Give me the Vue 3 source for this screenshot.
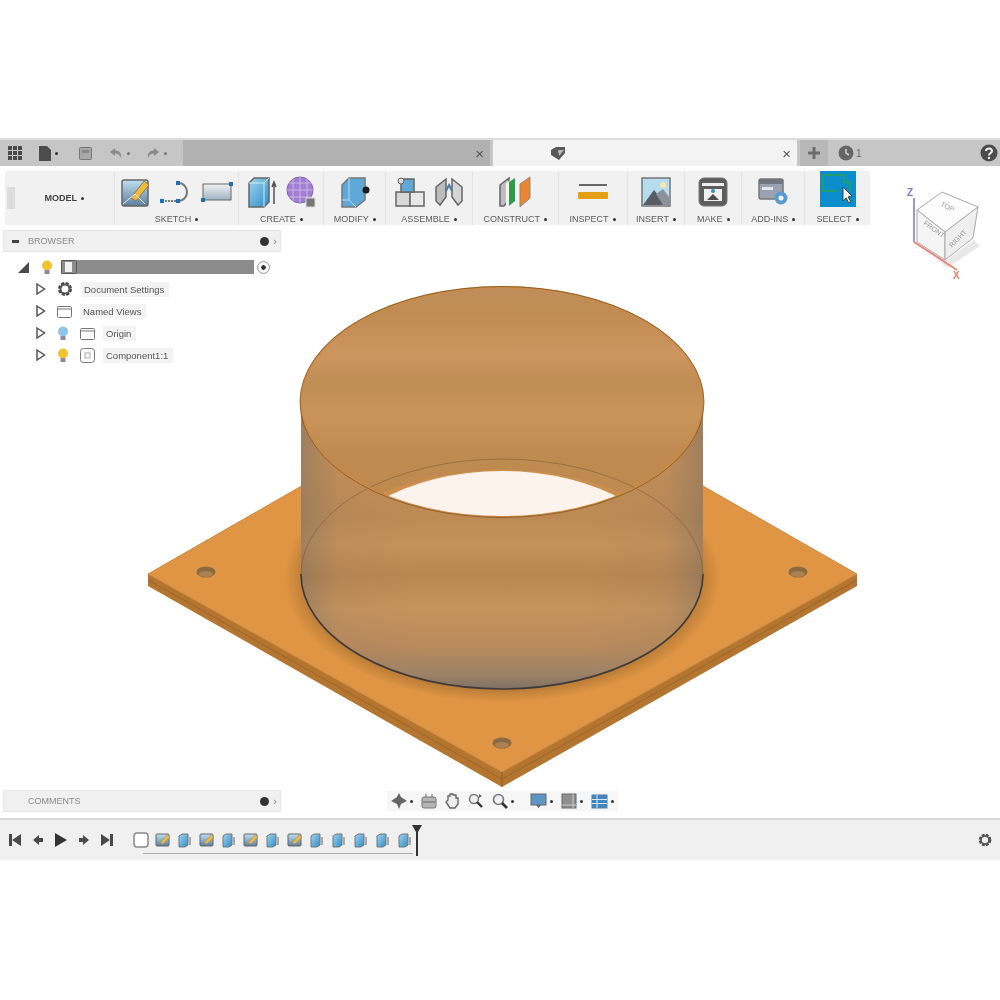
<script setup>
const treeRows = [
  { label: 'Document Settings', icon: 'gear' },
  { label: 'Named Views', icon: 'folder' },
  { label: 'Origin', icon: 'folder', bulb: '#8fc3e8' },
  { label: 'Component1:1', icon: 'comp', bulb: '#f2c230' },
]
const timelineItems = ['sk', 'ex', 'sk', 'ex', 'sk', 'ex', 'sk', 'ex', 'ex', 'ex', 'ex', 'ex']
</script>

<template>
  <div class="page">
    <svg class="defs" width="0" height="0">
      <defs>
        <linearGradient id="blueBox" x1="0" y1="0" x2="1" y2="1">
          <stop offset="0" stop-color="#9fd3ef" />
          <stop offset="1" stop-color="#2f8fc9" />
        </linearGradient>
        <linearGradient id="skyFill" x1="0" y1="0" x2="0" y2="1">
          <stop offset="0" stop-color="#bfe0f2" />
          <stop offset="1" stop-color="#5d7f9c" />
        </linearGradient>
        <symbol id="sk" viewBox="0 0 16 16">
          <rect x="1" y="2" width="13" height="12" rx="1" fill="url(#skyFill)" stroke="#666" />
          <path d="M5 11 L12 3 L15 5 L8 12 Z" fill="#f0b93a" stroke="#888" stroke-width=".5" />
        </symbol>
        <symbol id="ex" viewBox="0 0 16 16">
          <path d="M2 4 L5 2 H11 V13 L8 15 H2 Z" fill="url(#blueBox)" stroke="#777" />
          <path d="M13 5 V13" stroke="#aaa" stroke-width="2" />
        </symbol>
      </defs>
    </svg>

    <div class="app">
      <header class="tabbar">
        <div class="quick">
          <svg class="qa" width="14" height="14" viewBox="0 0 14 14" fill="#4a4a4a">
            <rect x="0" y="0" width="4" height="4" /><rect x="5" y="0" width="4" height="4" /><rect x="10" y="0" width="4" height="4" />
            <rect x="0" y="5" width="4" height="4" /><rect x="5" y="5" width="4" height="4" /><rect x="10" y="5" width="4" height="4" />
            <rect x="0" y="10" width="4" height="4" /><rect x="5" y="10" width="4" height="4" /><rect x="10" y="10" width="4" height="4" />
          </svg>
          <svg class="qb" width="12" height="15" viewBox="0 0 12 15"><path d="M0 0 H8 L12 4 V15 H0 Z" fill="#4d4d4d" /></svg>
          <i class="dot qdot" />
          <svg class="qc" width="13" height="13" viewBox="0 0 13 13"><rect x=".5" y=".5" width="12" height="12" rx="1" fill="#a8a8a8" stroke="#777" /><rect x="3" y="3" width="7" height="3" fill="#888" /></svg>
          <svg class="qd" width="14" height="12" viewBox="0 0 14 12"><path d="M6 1 L1 5 L6 9 V6.5 C9 6.5 11 8 12 11 C13 6 10 3.5 6 3.5 Z" fill="#8a8a8a" /></svg>
          <i class="dot qdot light" />
          <svg class="qe" width="14" height="12" viewBox="0 0 14 12"><path d="M8 1 L13 5 L8 9 V6.5 C5 6.5 3 8 2 11 C1 6 4 3.5 8 3.5 Z" fill="#8a8a8a" /></svg>
          <i class="dot qdot light" />
        </div>
        <div class="tab tab-off"><span class="tab-x">×</span></div>
        <div class="tab tab-on">
          <svg class="doc-icon" width="16" height="13" viewBox="0 0 16 13"><path d="M1 3 L6 0 H15 V6 L9 13 L1 8 Z" fill="#5a5a5a" /><path d="M8 3 H14 L9 9 Z" fill="#bbb" /></svg>
          <span class="tab-x">×</span>
        </div>
        <div class="tab-add">
          <svg width="14" height="14" viewBox="0 0 14 14"><path d="M7 1 V13 M1 7 H13" stroke="#6c6c6c" stroke-width="3" /></svg>
        </div>
        <div class="tab-rest">
          <svg width="16" height="16" viewBox="0 0 16 16"><circle cx="8" cy="8" r="7.5" fill="#666" /><path d="M8 4 V8 L11 10" stroke="#ccc" stroke-width="1.6" fill="none" /></svg>
          <span class="job-count">1</span>
          <svg class="help" width="18" height="18" viewBox="0 0 18 18"><circle cx="9" cy="9" r="8.5" fill="#4b4b4b" /><path d="M6 7 C6 3.5 12 3.5 12 7 C12 9 9 9 9 11.5" stroke="#eee" stroke-width="2" fill="none" /><circle cx="9" cy="14" r="1.2" fill="#eee" /></svg>
        </div>
      </header>

      <main class="workspace">
        <!-- model is drawn in page coordinates -->
        <svg class="model" width="1000" height="654" viewBox="0 166 1000 654">
          <defs>
            <linearGradient id="innerWall" x1="0" y1="0" x2="0" y2="1">
              <stop offset="0" stop-color="#c08e5c" />
              <stop offset=".12" stop-color="#c08c52" />
              <stop offset=".3" stop-color="#cc9660" />
              <stop offset=".42" stop-color="#bf8c54" />
              <stop offset=".55" stop-color="#ca955a" />
              <stop offset=".72" stop-color="#be8a50" />
              <stop offset="1" stop-color="#c08b50" />
            </linearGradient>
            <linearGradient id="outerWall" x1="0" y1="0" x2="0" y2="1">
              <stop offset="0" stop-color="#c08d58" />
              <stop offset=".22" stop-color="#c48f58" />
              <stop offset=".4" stop-color="#bd8a54" />
              <stop offset=".5" stop-color="#c5915a" />
              <stop offset=".6" stop-color="#b98650" />
              <stop offset=".72" stop-color="#c6935c" />
              <stop offset=".85" stop-color="#b98a5c" />
              <stop offset=".95" stop-color="#9c8266" />
              <stop offset="1" stop-color="#7f7064" />
            </linearGradient>
            <linearGradient id="wallEdge" x1="0" y1="0" x2="1" y2="0">
              <stop offset="0" stop-color="#6e6a66" stop-opacity=".42" />
              <stop offset=".09" stop-color="#6e6a66" stop-opacity=".08" />
              <stop offset=".3" stop-color="#6e6a66" stop-opacity="0" />
              <stop offset=".7" stop-color="#6e6a66" stop-opacity="0" />
              <stop offset=".91" stop-color="#6e6a66" stop-opacity=".08" />
              <stop offset="1" stop-color="#6e6a66" stop-opacity=".42" />
            </linearGradient>
            <radialGradient id="baseShadow" cx=".5" cy=".5" r=".5">
              <stop offset=".88" stop-color="#6e4a22" stop-opacity=".4" />
              <stop offset="1" stop-color="#6e4a22" stop-opacity="0" />
            </radialGradient>
            <clipPath id="openingClip">
              <ellipse cx="502" cy="402" rx="201" ry="115" />
            </clipPath>
          </defs>

          <path d="M148 574 L502 772 L857 574 V586 L502 787 L148 586 Z" fill="#b3752f" />
          <path d="M148 580 L502 779 L857 580" fill="none" stroke="#8f5c24" stroke-width=".6" />
          <path d="M148 574 L502 371 L857 574 L502 772 Z" fill="#df9543" stroke="#c07f35" stroke-width=".8" />
          <path d="M502 772 V787" stroke="#8f5c24" stroke-width="1" />

          <ellipse cx="502" cy="578" rx="218" ry="124" fill="url(#baseShadow)" />

          <ellipse cx="206" cy="572" rx="9.5" ry="5.5" fill="#8a6a45" />
          <ellipse cx="206" cy="574" rx="7" ry="3" fill="#ad8250" />
          <ellipse cx="798" cy="572" rx="9.5" ry="5.5" fill="#8a6a45" />
          <ellipse cx="798" cy="574" rx="7" ry="3" fill="#ad8250" />
          <ellipse cx="502" cy="743" rx="9.5" ry="5.5" fill="#8a6a45" />
          <ellipse cx="502" cy="745" rx="7" ry="3" fill="#ad8250" />

          <ellipse cx="502" cy="402" rx="201" ry="115" fill="url(#innerWall)" />
          <g clip-path="url(#openingClip)">
            <ellipse cx="502" cy="574" rx="190" ry="104" fill="#cc8f4c" />
            <ellipse cx="502" cy="577" rx="176" ry="106" fill="#fbf3ec" />
          </g>
          <path d="M301 402 V574 A201 115 0 0 0 703 574 V402 A201 115 0 0 1 301 402 Z" fill="url(#outerWall)" />
          <path d="M301 402 V574 A201 115 0 0 0 703 574 V402 A201 115 0 0 1 301 402 Z" fill="url(#wallEdge)" />

          <path d="M301 574 A201 115 0 0 1 703 574" fill="none" stroke="#7b5a38" stroke-width=".8" opacity=".7" />
          <path d="M301 574 A201 115 0 0 0 703 574" fill="none" stroke="#3d3a38" stroke-width="1.6" />
          <ellipse cx="502" cy="402" rx="201" ry="115" fill="none" stroke="#d18a3d" stroke-width="2" />
          <ellipse cx="502" cy="402" rx="202" ry="115.5" fill="none" stroke="#7a5530" stroke-width=".8" />
        </svg>

        <svg class="viewcube" width="90" height="105" viewBox="0 0 90 105">
          <path d="M17 60 L45 86 L78 64 L72 58 L45 78 Z" fill="#d8d8d8" opacity=".6" />
          <path d="M15 28 L40 10 L76 25 L43 50 Z" fill="#fdfdfd" stroke="#a8a8a8" />
          <path d="M15 28 L43 50 V78 L15 60 Z" fill="#f5f5f5" stroke="#a8a8a8" />
          <path d="M43 50 L76 25 L71 56 L43 78 Z" fill="#efefef" stroke="#a8a8a8" />
          <path d="M12 16 V60" stroke="#7a7fc8" stroke-width="1.6" />
          <path d="M12 60 L55 88" stroke="#ee7a70" stroke-width="1.6" />
          <text x="5" y="14" class="axis axis-z">Z</text>
          <text x="51" y="97" class="axis axis-x">X</text>
          <text class="cube-label" transform="translate(38 24) rotate(24)">TOP</text>
          <text class="cube-label" transform="translate(21 42) rotate(36)">FRONT</text>
          <text class="cube-label" transform="translate(50 66) rotate(-46)">RIGHT</text>
        </svg>

        <div class="upper">
          <nav class="toolbar">
            <div class="grip" />
            <div class="group g-model"><span class="model-label">MODEL</span><i class="dot" /></div>

            <div class="group g-sketch">
              <div class="icons">
                <svg width="30" height="30" viewBox="0 0 30 30"><rect x="1" y="3" width="26" height="26" rx="2" fill="url(#skyFill)" stroke="#666" stroke-width="1.5" /><path d="M10 21 L23 4 L28 8 L15 24 Z" fill="#f0b93a" stroke="#8b7a55" /><path d="M2 27 L14 17 L24 27" fill="none" stroke="#eee" /></svg>
                <svg width="32" height="26" viewBox="0 0 32 26"><path d="M2 22 H18" stroke="#555" stroke-width="1.5" stroke-dasharray="2 1" /><path d="M18 4 C30 4 30 22 18 22" fill="none" stroke="#777" stroke-width="2" /><rect x="0" y="20" width="4" height="4" fill="#1f6fb8" /><rect x="16" y="20" width="4" height="4" fill="#1f6fb8" /><rect x="16" y="2" width="4" height="4" fill="#1f6fb8" /></svg>
                <svg width="32" height="24" viewBox="0 0 32 24"><defs><linearGradient id="rectFill" x1="0" y1="0" x2="0" y2="1"><stop offset="0" stop-color="#f2f2f2" /><stop offset="1" stop-color="#9fb1c4" /></linearGradient></defs><rect x="2" y="4" width="28" height="16" fill="url(#rectFill)" stroke="#666" /><rect x="0" y="18" width="4" height="4" fill="#1f6fb8" /><rect x="28" y="2" width="4" height="4" fill="#1f6fb8" /></svg>
              </div>
              <div class="label">SKETCH<i class="dot" /></div>
            </div>

            <div class="group g-create">
              <div class="icons">
                <svg width="30" height="32" viewBox="0 0 30 32"><path d="M2 7 L7 2 H22 V26 L17 31 H2 Z" fill="url(#blueBox)" stroke="#666" stroke-width="1.5" /><path d="M17 31 V7 L22 2 M2 7 H17" fill="none" stroke="#d5ecf8" /><path d="M27 28 V8 M25 11 L27 6 L29 11" stroke="#555" stroke-width="1.5" fill="none" /></svg>
                <svg width="30" height="32" viewBox="0 0 30 32"><circle cx="14" cy="14" r="13" fill="#a27fd3" stroke="#7d5fb0" /><path d="M1 14 H27 M14 1 V27 M3 7 H25 M3 21 H25 M7 3 V25 M21 3 V25" stroke="#ccb6e8" stroke-width="1" /><rect x="20" y="22" width="9" height="9" fill="#777" stroke="#ddd" /></svg>
              </div>
              <div class="label">CREATE<i class="dot" /></div>
            </div>

            <div class="group g-modify">
              <div class="icons">
                <svg width="30" height="32" viewBox="0 0 30 32"><path d="M2 9 L9 2 H25 V24 L16 31 H2 Z" fill="#5ea9d8" stroke="#777" stroke-width="1.5" /><path d="M9 2 V24 H2 M9 24 L16 31" fill="none" stroke="#b4dcf2" /><circle cx="26" cy="14" r="3.5" fill="#1b1b1b" /></svg>
              </div>
              <div class="label">MODIFY<i class="dot" /></div>
            </div>

            <div class="group g-assemble">
              <div class="icons">
                <svg width="30" height="30" viewBox="0 0 30 30"><rect x="1" y="15" width="14" height="14" fill="#d8d8d8" stroke="#666" stroke-width="1.5" /><rect x="15" y="15" width="14" height="14" fill="#e8e8e8" stroke="#666" stroke-width="1.5" /><rect x="6" y="2" width="13" height="13" fill="#5ea9d8" stroke="#666" stroke-width="1.5" /><circle cx="6" cy="4" r="3" fill="#ddd" stroke="#666" /></svg>
                <svg width="30" height="30" viewBox="0 0 30 30"><path d="M2 10 L12 2 V20 L6 28 L2 24 Z" fill="#bcbcbc" stroke="#666" stroke-width="1.5" /><path d="M28 10 L18 2 V20 L24 28 L28 24 Z" fill="#d5d5d5" stroke="#666" stroke-width="1.5" /><path d="M12 14 L15 8 L18 14" fill="none" stroke="#4b7ea8" stroke-width="2" /></svg>
              </div>
              <div class="label">ASSEMBLE<i class="dot" /></div>
            </div>

            <div class="group g-construct">
              <div class="icons">
                <svg width="32" height="32" viewBox="0 0 32 32"><path d="M1 9 L10 2 V24 L5 30 H1 Z" fill="#bdbdbd" stroke="#666" stroke-width="1.5" /><path d="M7 7 L15 2 V24 L7 30 Z" fill="#f6f6f6" /><path d="M10 6 L16 2 V25 L10 30 Z" fill="#2f9a48" /><path d="M21 8 L31 1 V22 L21 31 Z" fill="#ee8530" stroke="#888" /></svg>
              </div>
              <div class="label">CONSTRUCT<i class="dot" /></div>
            </div>

            <div class="group g-inspect">
              <div class="icons">
                <svg width="30" height="18" viewBox="0 0 30 18"><path d="M1 2 H29" stroke="#666" stroke-width="2" /><rect x="0" y="9" width="30" height="7" rx="1" fill="#e4a014" /></svg>
              </div>
              <div class="label">INSPECT<i class="dot" /></div>
            </div>

            <div class="group g-insert">
              <div class="icons">
                <svg width="30" height="30" viewBox="0 0 30 30"><rect x="1" y="1" width="28" height="28" fill="#b5dcef" stroke="#777" stroke-width="1.5" /><circle cx="22" cy="8" r="3" fill="#f6e7a8" /><path d="M2 28 L13 13 L25 28 Z" fill="#585d63" /><path d="M15 17 L22 12 L28 20 V28 H22 Z" fill="#8c9299" /></svg>
              </div>
              <div class="label">INSERT<i class="dot" /></div>
            </div>

            <div class="group g-make">
              <div class="icons">
                <svg width="30" height="30" viewBox="0 0 30 30"><rect x="1" y="1" width="28" height="28" rx="5" fill="#5d5d5d" stroke="#777" /><rect x="4" y="6" width="22" height="3" fill="#eee" /><rect x="6" y="12" width="18" height="12" fill="#f0f0f0" /><path d="M9 23 L15 17 L21 23 Z" fill="#4c4c4c" /><circle cx="15" cy="14" r="2" fill="#2f8fc9" /></svg>
              </div>
              <div class="label">MAKE<i class="dot" /></div>
            </div>

            <div class="group g-addins">
              <div class="icons">
                <svg width="30" height="30" viewBox="0 0 30 30"><rect x="1" y="2" width="24" height="20" rx="2" fill="#98a2b0" stroke="#777" stroke-width="1.5" /><rect x="1" y="2" width="24" height="5" fill="#6f7680" /><rect x="4" y="10" width="11" height="3" fill="#e6e6e6" /><circle cx="23" cy="21" r="6.5" fill="#5a9ccb" /><circle cx="23" cy="21" r="2.5" fill="#f2f2f2" /></svg>
              </div>
              <div class="label">ADD-INS<i class="dot" /></div>
            </div>

            <div class="group g-select">
              <div class="icons icons-top">
                <svg width="36" height="36" viewBox="0 0 36 36"><rect width="36" height="36" fill="#0b8ecb" /><path d="M3 4 H24 V11 H30 V20 M3 4 V20 H18" fill="none" stroke="#2aa24f" stroke-width="1.5" /><path d="M23 16 L23 30 L26 27 L29 32 L31 31 L28 26 L32 25 Z" fill="#fafafa" stroke="#222" stroke-width=".8" /></svg>
              </div>
              <div class="label">SELECT<i class="dot" /></div>
            </div>
          </nav>

          <section class="browser">
            <div class="panel-head">
              <span class="collapse" />
              <span class="panel-title">BROWSER</span>
              <span class="panel-pin" />
              <span class="panel-chev">›</span>
            </div>
            <div class="root-row">
              <svg class="root-arrow" width="11" height="11" viewBox="0 0 11 11"><path d="M0 11 L11 0 V11 Z" fill="#4a4a4a" /></svg>
              <svg class="bulb" width="12" height="15" viewBox="0 0 12 15"><circle cx="6" cy="5.5" r="5" fill="#f2c230" /><rect x="3.5" y="10" width="5" height="4" fill="#8c86a8" /></svg>
              <div class="root-bar">
                <svg width="16" height="14" viewBox="0 0 16 14"><rect x=".5" y=".5" width="15" height="13" rx="1" fill="#8c8c8c" stroke="#555" /><rect x="4" y="2" width="7" height="10" fill="#f2f2f2" /></svg>
              </div>
              <span class="radio" />
            </div>
            <div v-for="row in treeRows" :key="row.label" class="tree-row">
              <svg class="expander" width="10" height="12" viewBox="0 0 10 12"><path d="M1 1 L8.5 6 L1 11 Z" fill="#fff" stroke="#555" stroke-width="1.5" /></svg>
              <svg v-if="row.bulb" class="bulb" width="12" height="15" viewBox="0 0 12 15"><circle cx="6" cy="5.5" r="5" :fill="row.bulb" /><rect x="3.5" y="10" width="5" height="4" fill="#8c86a8" /></svg>
              <svg v-if="row.icon === 'gear'" width="16" height="16" viewBox="0 0 16 16"><circle cx="8" cy="8" r="5.5" fill="none" stroke="#444" stroke-width="3" stroke-dasharray="3 1.3" /><circle cx="8" cy="8" r="4.5" fill="none" stroke="#555" stroke-width="2" /></svg>
              <svg v-else-if="row.icon === 'folder'" width="15" height="13" viewBox="0 0 15 13"><rect x=".5" y="1.5" width="14" height="11" rx="1" fill="#fff" stroke="#777" /><path d="M1 4 H14" stroke="#777" /></svg>
              <svg v-else width="15" height="15" viewBox="0 0 15 15"><rect x=".5" y=".5" width="14" height="14" rx="3" fill="#fff" stroke="#777" /><rect x="5" y="5" width="5" height="5" fill="none" stroke="#aaa" /></svg>
              <span class="row-label">{{ row.label }}</span>
            </div>
          </section>
        </div>

        <div class="lower">
          <section class="comments">
            <span class="panel-title">COMMENTS</span>
            <span class="panel-pin" />
            <span class="panel-chev">›</span>
          </section>
          <div class="navbar">
            <svg width="16" height="16" viewBox="0 0 16 16"><path d="M8 0 L10 4 L16 8 L10 11 L8 16 L6 11 L0 8 L6 4 Z" fill="#666" /></svg><i class="dot" />
            <svg width="16" height="15" viewBox="0 0 16 15"><rect x="1" y="3" width="14" height="11" rx="2" fill="#b5b5b5" stroke="#777" /><path d="M5 3 V0 M11 3 V0 M2 8 H14" stroke="#666" /></svg>
            <svg width="15" height="16" viewBox="0 0 15 16"><path d="M3 7 V3 H5 V1 H8 V2 H11 V5 H13 V11 L10 15 H5 L1 9 Z" fill="#eee" stroke="#666" stroke-width="1.4" /></svg>
            <svg width="16" height="16" viewBox="0 0 16 16"><circle cx="6" cy="6" r="4.5" fill="#eee" stroke="#777" stroke-width="1.5" /><path d="M9 9 L14 14" stroke="#333" stroke-width="2.4" /><path d="M11 1 L14 3 L11 5 Z" fill="#666" /></svg>
            <svg width="16" height="16" viewBox="0 0 16 16"><circle cx="6.5" cy="6.5" r="5" fill="#eef2f5" stroke="#777" stroke-width="1.6" /><path d="M10 10 L15 15" stroke="#333" stroke-width="2.6" /></svg><i class="dot" />
            <svg class="nav-gap" width="17" height="16" viewBox="0 0 17 16"><rect x="1" y="1" width="15" height="11" fill="#5b96c6" stroke="#666" /><path d="M6 12 L8.5 15 L11 12 Z" fill="#666" /></svg><i class="dot" />
            <svg width="16" height="16" viewBox="0 0 16 16"><rect x="1" y="1" width="14" height="14" fill="#8f8f8f" stroke="#666" /><path d="M1 12 H15 M12 1 V15" stroke="#c9c9c9" /></svg><i class="dot" />
            <svg width="17" height="15" viewBox="0 0 17 15"><rect x="1" y="1" width="15" height="13" fill="#3d86bf" stroke="#5a7f9c" /><path d="M1 5.5 H16 M1 9.5 H16 M6 1 V14" stroke="#d9e8f2" /></svg><i class="dot" />
          </div>
        </div>
      </main>

      <footer class="timeline">
        <div class="controls">
          <svg width="12" height="12" viewBox="0 0 12 12" fill="#4a4a4a"><rect x="0" y="0" width="3" height="12" /><path d="M12 0 V12 L3 6 Z" /></svg>
          <svg width="12" height="12" viewBox="0 0 12 12" fill="#4a4a4a"><path d="M7 1 V11 L1 6 Z" /><rect x="7" y="4" width="4" height="4" /></svg>
          <svg width="12" height="14" viewBox="0 0 12 14" fill="#333"><path d="M0 0 L12 7 L0 14 Z" /></svg>
          <svg width="12" height="12" viewBox="0 0 12 12" fill="#4a4a4a"><path d="M5 1 V11 L11 6 Z" /><rect x="1" y="4" width="4" height="4" /></svg>
          <svg width="12" height="12" viewBox="0 0 12 12" fill="#4a4a4a"><rect x="9" y="0" width="3" height="12" /><path d="M0 0 V12 L9 6 Z" /></svg>
        </div>
        <div class="steps">
          <svg width="16" height="16" viewBox="0 0 16 16"><rect x="1" y="1" width="14" height="14" rx="3" fill="#fff" stroke="#888" stroke-width="1.5" /></svg>
          <svg v-for="(item, i) in timelineItems" :key="i" width="16" height="16"><use :href="'#' + item" width="16" height="16" /></svg>
          <div class="track" />
          <svg class="marker" width="12" height="31" viewBox="0 0 12 31"><path d="M1 0 H11 L7 7 V31 H5 V7 Z" fill="#333" /></svg>
        </div>
        <svg class="tl-gear" width="14" height="14" viewBox="0 0 14 14"><circle cx="7" cy="7" r="4.8" fill="none" stroke="#4a4a4a" stroke-width="3" stroke-dasharray="2.6 1.2" /><circle cx="7" cy="7" r="4" fill="none" stroke="#555" stroke-width="1.6" /></svg>
      </footer>
    </div>
  </div>
</template>

<style scoped>
.page {
  height: 1000px;
  padding-top: 138px;
  box-sizing: border-box;
  background: #fff;
  font-family: "Liberation Sans", Arial, sans-serif;
  overflow: hidden;
}
.defs { position: absolute; }
.app {
  height: 722px;
  display: flex;
  flex-direction: column;
  filter: blur(0.7px);
}
.dot {
  display: inline-block;
  width: 3px;
  height: 3px;
  margin-left: 4px;
  border-radius: 50%;
  background: #333;
  vertical-align: middle;
}

/* tab bar */
.tabbar {
  height: 28px;
  border-top: 2px solid #dcdcdc;
  box-sizing: border-box;
  display: flex;
  background: #c6c6c6;
  flex-shrink: 0;
}
.quick {
  width: 183px;
  display: flex;
  align-items: center;
  padding-left: 8px;
  box-sizing: border-box;
}
.qb { margin-left: 17px; }
.qdot { margin-left: 4px; }
.qdot.light { background: #777; }
.qc { margin-left: 21px; }
.qd { margin-left: 17px; }
.qe { margin-left: 16px; }
.tab {
  display: flex;
  align-items: center;
  position: relative;
}
.tab-off {
  width: 307px;
  background: #b1b1b1;
  justify-content: flex-end;
  padding-right: 6px;
  box-sizing: border-box;
}
.tab-on {
  width: 304px;
  margin-left: 3px;
  background: #f3f3f3;
  justify-content: flex-end;
  padding-right: 6px;
  box-sizing: border-box;
}
.doc-icon {
  position: absolute;
  left: 57px;
  top: 7px;
}
.tab-x {
  font-size: 15px;
  line-height: 15px;
  color: #555;
}
.tab-add {
  width: 28px;
  margin-left: 3px;
  background: #b8b8b8;
  display: flex;
  align-items: center;
  justify-content: center;
}
.tab-rest {
  flex: 1;
  display: flex;
  align-items: center;
  padding-left: 10px;
  padding-right: 2px;
}
.job-count {
  margin-left: 2px;
  font-size: 10px;
  color: #666;
}
.help { margin-left: auto; }

/* workspace */
.workspace {
  position: relative;
  flex: 1;
  display: flex;
  flex-direction: column;
  justify-content: space-between;
  background: #fff;
}
.model {
  position: absolute;
  left: 0;
  top: 0;
}
.viewcube {
  position: absolute;
  left: 902px;
  top: 16px;
}
.axis { font-size: 10px; font-weight: 700; }
.axis-z { fill: #7a7fc8; }
.axis-x { fill: #ee7a70; }
.cube-label { font-size: 7px; fill: #999; }
.upper, .lower { position: relative; }

/* toolbar */
.toolbar {
  display: flex;
  width: 865px;
  height: 54px;
  margin: 5px 0 0 5px;
  background: #f1f1f1;
}
.grip {
  width: 8px;
  margin: 16px -8px 16px 2px;
  background: #dcdcdc;
}
.group {
  display: flex;
  flex-direction: column;
  align-items: center;
  justify-content: flex-end;
  box-sizing: border-box;
  border-right: 1px solid #e2e2e2;
}
.g-model { width: 108px; flex-direction: row; justify-content: center; align-items: center; padding: 0 0 0 8px; }
.g-sketch { width: 125px; }
.g-create { width: 85px; }
.g-modify { width: 62px; }
.g-assemble { width: 87px; }
.g-construct { width: 86px; }
.g-inspect { width: 69px; }
.g-insert { width: 58px; }
.g-make { width: 57px; }
.g-addins { width: 63px; }
.g-select { width: 65px; border-right: 0; }
.model-label {
  font-size: 9px;
  font-weight: 700;
  color: #444;
}
.icons {
  flex: 1;
  display: flex;
  align-items: center;
  gap: 9px;
}
.icons-top { align-items: flex-start; }
.label {
  font-size: 9px;
  line-height: 12px;
  color: #5c5c5c;
  white-space: nowrap;
}

/* browser */
.browser {
  width: 278px;
  margin: 5px 0 0 3px;
}
.panel-head, .comments {
  height: 22px;
  display: flex;
  align-items: center;
  background: #f0f0f0;
  border: 1px solid #e6e6e6;
  box-sizing: border-box;
  padding: 0 3px 0 8px;
}
.collapse {
  width: 7px;
  height: 3px;
  background: #444;
  margin-right: 9px;
}
.panel-title {
  font-size: 9px;
  color: #8a8a8a;
}
.panel-pin {
  width: 9px;
  height: 9px;
  margin-left: auto;
  border-radius: 50%;
  background: #333;
}
.panel-chev {
  margin-left: 4px;
  font-size: 11px;
  line-height: 11px;
  color: #888;
}
.root-row {
  height: 22px;
  margin-top: 4px;
  display: flex;
  align-items: center;
  padding-left: 15px;
}
.root-row .bulb { margin-left: 12px; }
.root-bar {
  width: 193px;
  height: 14px;
  margin-left: 8px;
  background: #8c8c8c;
  display: flex;
}
.radio {
  width: 13px;
  height: 13px;
  margin-left: 3px;
  box-sizing: border-box;
  border: 1px solid #999;
  border-radius: 50%;
  background: radial-gradient(circle, #333 0 2px, #f5f5f5 2.5px);
}
.tree-row {
  height: 22px;
  display: flex;
  align-items: center;
  padding-left: 33px;
  gap: 11px;
}
.row-label {
  margin-left: -3px;
  padding: 2px 5px 2px 3px;
  background: #f3f3f3;
  font-size: 9.5px;
  line-height: 11px;
  color: #555;
}

/* bottom of the canvas */
.lower {
  display: flex;
  align-items: center;
  padding: 0 0 6px 3px;
}
.comments {
  width: 278px;
  padding-left: 24px;
}
.navbar {
  margin-left: 106px;
  display: flex;
  align-items: center;
  gap: 8px;
  padding: 2px 4px;
  background: #f6f6f6;
}
.navbar .dot { margin-left: -5px; }
.nav-gap { margin-left: 8px; }

/* timeline */
.timeline {
  height: 42px;
  display: flex;
  align-items: center;
  background: #f0f0f0;
  border-top: 2px solid #d8d8d8;
  box-sizing: border-box;
  flex-shrink: 0;
}
.controls {
  width: 133px;
  display: flex;
  align-items: center;
  gap: 11px;
  padding-left: 9px;
  box-sizing: border-box;
}
.steps {
  position: relative;
  display: flex;
  align-items: center;
  gap: 6px;
}
.track {
  position: absolute;
  left: 10px;
  right: 0;
  bottom: -6px;
  height: 1px;
  background: #aaa;
}
.marker {
  position: absolute;
  right: -10px;
  top: -7px;
}
.tl-gear { margin-left: auto; margin-right: 8px; }
</style>
